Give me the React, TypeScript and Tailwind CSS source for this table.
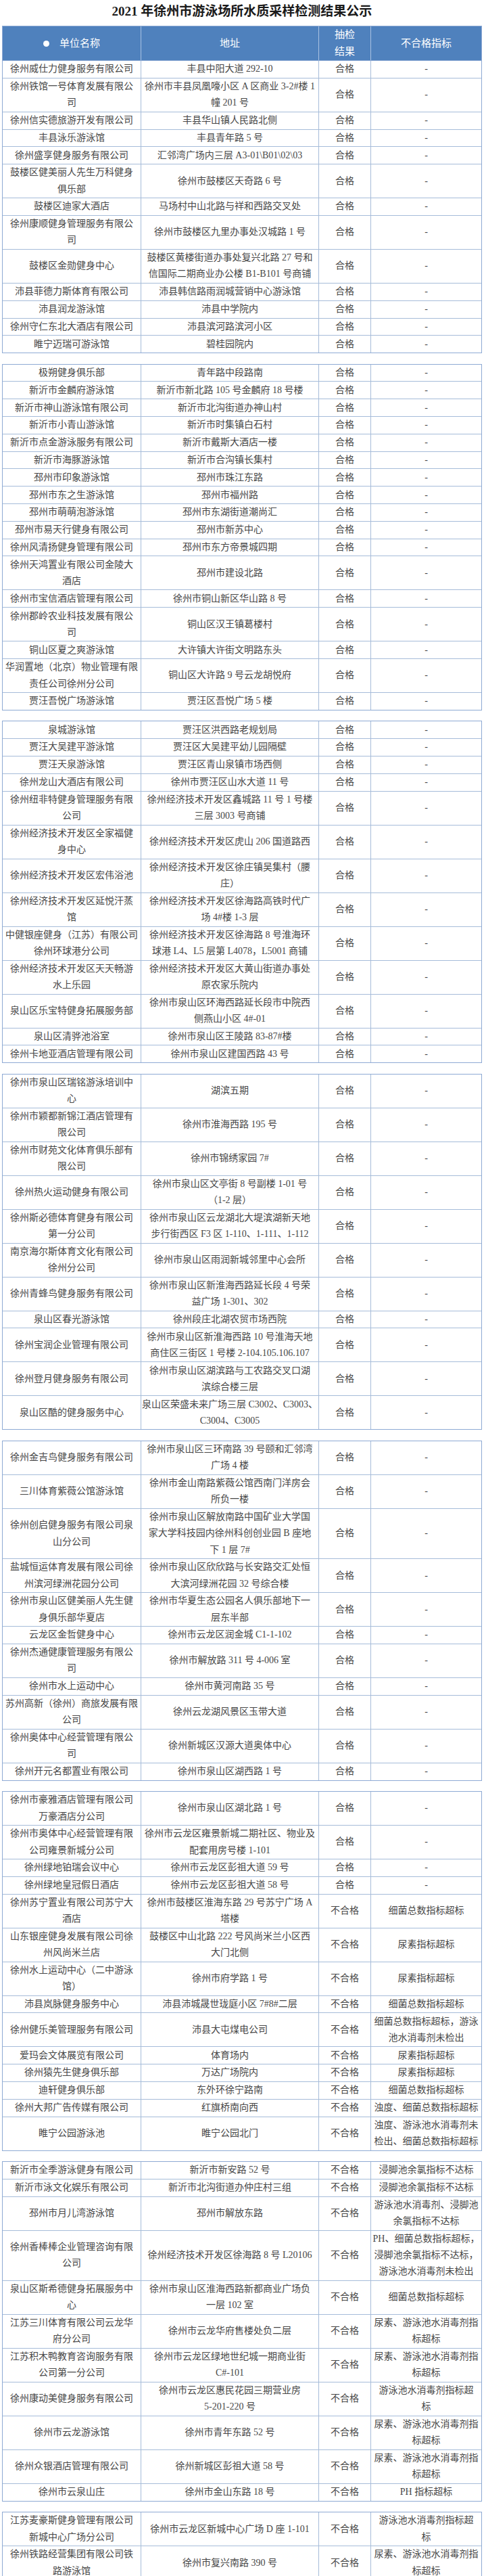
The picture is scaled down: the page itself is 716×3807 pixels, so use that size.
type Row = [string, string, string?, string?]

// "|" marks the line breaks seen in the reference
const SECTIONS: Row[][] = [
  [
    ['徐州威仕力健身服务有限公司', '丰县中阳大道 292-10'],
    ['徐州铁馆一号体育发展有限公|司', '徐州市丰县凤凰嚎小区 A 区商业 3-2#楼 1|幢 201 号'],
    ['徐州信实德旅游开发有限公司', '丰县华山镇人民路北侧'],
    ['丰县泳乐游泳馆', '丰县青年路 5 号'],
    ['徐州盛享健身服务有限公司', '汇邻湾广场内三层 A3-01\\B01\\02\\03'],
    ['鼓楼区健美丽人先生万科健身|俱乐部', '徐州市鼓楼区天奇路 6 号'],
    ['鼓楼区迪家大酒店', '马场村中山北路与祥和西路交叉处'],
    ['徐州康顺健身管理服务有限公|司', '徐州市鼓楼区九里办事处汉城路 1 号'],
    ['鼓楼区金勋健身中心', '鼓楼区黄楼街道办事处复兴北路 27 号和|信国际二期商业办公楼 B1-B101 号商铺'],
    ['沛县菲德力斯体育有限公司', '沛县韩信路雨润城营销中心游泳馆'],
    ['沛县润龙游泳馆', '沛县中学院内'],
    ['徐州守仁东北大酒店有限公司', '沛县滨河路滨河小区'],
    ['睢宁迈瑞可游泳馆', '碧桂园院内'],
  ],
  [
    ['极朔健身俱乐部', '青年路中段路南'],
    ['新沂市金麟府游泳馆', '新沂市新北路 105 号金麟府 18 号楼'],
    ['新沂市神山游泳馆有限公司', '新沂市北沟街道办神山村'],
    ['新沂市小青山游泳馆', '新沂市时集镇白石村'],
    ['新沂市点金游泳服务有限公司', '新沂市戴斯大酒店一楼'],
    ['新沂市海豚游泳馆', '新沂市合沟镇长集村'],
    ['邳州市印象游泳馆', '邳州市珠江东路'],
    ['邳州市东之生游泳馆', '邳州市福州路'],
    ['邳州市萌萌泡游泳馆', '邳州市东湖街道潮尚汇'],
    ['邳州市易天行健身有限公司', '邳州市新苏中心'],
    ['徐州风清扬健身管理有限公司', '邳州市东方帝景城四期'],
    ['徐州天鸿置业有限公司金陵大|酒店', '邳州市建设北路'],
    ['徐州市宝信酒店管理有限公司', '徐州市铜山新区华山路 8 号'],
    ['徐州郡岭农业科技发展有限公|司', '铜山区汉王镇葛楼村'],
    ['铜山区夏之爽游泳馆', '大许镇大许街文明路东头'],
    ['华润置地（北京）物业管理有限|责任公司徐州分公司', '铜山区大许路 9 号云龙胡悦府'],
    ['贾汪吾悦广场游泳馆', '贾汪区吾悦广场 5 楼'],
  ],
  [
    ['泉城游泳馆', '贾汪区洪西路老规划局'],
    ['贾汪大吴建平游泳馆', '贾汪区大吴建平幼儿园隔壁'],
    ['贾汪天泉游泳馆', '贾汪区青山泉镇市场西侧'],
    ['徐州龙山大酒店有限公司', '徐州市贾汪区山水大道 11 号'],
    ['徐州纽非特健身管理服务有限|公司', '徐州经济技术开发区鑫城路 11 号 1 号楼|三层 3003 号商铺'],
    ['徐州经济技术开发区全家福健|身中心', '徐州经济技术开发区虎山 206 国道路西'],
    ['徐州经济技术开发区宏伟浴池', '徐州经济技术开发区徐庄镇吴集村（腰|庄）'],
    ['徐州经济技术开发区延悦汗蒸|馆', '徐州经济技术开发区徐海路高铁时代广|场 4#楼 1-3 层'],
    ['中健银座健身（江苏）有限公司|徐州环球港分公司', '徐州经济技术开发区徐海路 8 号淮海环|球港 L4、L5 层第 L4078，L5001 商铺'],
    ['徐州经济技术开发区天天畅游|水上乐园', '徐州经济技术开发区大黄山街道办事处|原农家乐院内'],
    ['泉山区乐宝特健身拓展服务部', '徐州市泉山区环海西路延长段市中院西|侧燕山小区 4#-01'],
    ['泉山区清骅池浴室', '徐州市泉山区王陵路 83-87#楼'],
    ['徐州卡地亚酒店管理有限公司', '徐州市泉山区建国西路 43 号'],
  ],
  [
    ['徐州市泉山区瑞铭游泳培训中|心', '湖滨五期'],
    ['徐州市颖都新锦江酒店管理有|限公司', '徐州市淮海西路 195 号'],
    ['徐州市财苑文化体育俱乐部有|限公司', '徐州市锦绣家园 7#'],
    ['徐州热火运动健身有限公司', '徐州市泉山区文亭街 8 号副楼 1-01 号|（1-2 层）'],
    ['徐州斯必德体育健身有限公司|第一分公司', '徐州市泉山区云龙湖北大堤滨湖新天地|步行街西区 F3 区 1-110、1-111、1-112'],
    ['南京海尔斯体育文化有限公司|徐州分公司', '徐州市泉山区雨润新城邻里中心会所'],
    ['徐州青蜂鸟健身服务有限公司', '徐州市泉山区新淮海西路延长段 4 号荣|益广场 1-301、302'],
    ['泉山区春光游泳馆', '徐州段庄北湖农贸市场西院'],
    ['徐州宝润企业管理有限公司', '徐州市泉山区新淮海西路 10 号淮海天地|商住区三街区 1 号楼 2-104.105.106.107'],
    ['徐州登月健身服务有限公司', '徐州市泉山区湖滨路与工农路交叉口湖|滨综合楼三层'],
    ['泉山区酷的健身服务中心', '泉山区荣盛未来广场三层 C3002、C3003、|C3004、C3005'],
  ],
  [
    ['徐州金吉鸟健身服务有限公司', '徐州市泉山区三环南路 39 号颐和汇邻湾|广场 4 楼'],
    ['三川体育紫薇公馆游泳馆', '徐州市金山南路紫薇公馆西南门洋房会|所负一楼'],
    ['徐州创启健身服务有限公司泉|山分公司', '徐州市泉山区解放南路中国矿业大学国|家大学科技园内徐州科创创业园 B 座地|下 1 层 7#'],
    ['盐城恒运体育发展有限公司徐|州滨河绿洲花园分公司', '徐州市泉山区欣欣路与长安路交汇处恒|大滨河绿洲花园 32 号综合楼'],
    ['徐州市泉山区健美丽人先生健|身俱乐部华夏店', '徐州市华夏生态公园名人俱乐部地下一|层东半部'],
    ['云龙区金哲健身中心', '徐州市云龙区润金城 C1-1-102'],
    ['徐州杰通健康管理服务有限公|司', '徐州市解放路 311 号 4-006 室'],
    ['徐州市水上运动中心', '徐州市黄河南路 35 号'],
    ['苏州高新（徐州）商旅发展有限|公司', '徐州云龙湖风景区玉带大道'],
    ['徐州奥体中心经营管理有限公|司', '徐州新城区汉源大道奥体中心'],
    ['徐州开元名都置业有限公司', '徐州市泉山区湖西路 1 号'],
  ],
  [
    ['徐州市豪雅酒店管理有限公司|万豪酒店分公司', '徐州市泉山区湖北路 1 号'],
    ['徐州市奥体中心经营管理有限|公司雍景新城分公司', '徐州市云龙区雍景新城二期社区、物业及|配套用房号楼 1-101'],
    ['徐州绿地铂瑞会议中心', '徐州市云龙区彭祖大道 59 号'],
    ['徐州绿地皇冠假日酒店', '徐州市云龙区彭祖大道 58 号'],
    ['徐州苏宁置业有限公司苏宁大|酒店', '徐州市鼓楼区淮海东路 29 号苏宁广场 A|塔楼', '不合格', '细菌总数指标超标'],
    ['山东银座健身发展有限公司徐|州风尚米兰店', '鼓楼区中山北路 222 号风尚米兰小区西|大门北侧', '不合格', '尿素指标超标'],
    ['徐州水上运动中心（二中游泳|馆）', '徐州市府学路 1 号', '不合格', '尿素指标超标'],
    ['沛县岚脉健身服务中心', '沛县沛城晟世珑庭小区 7#8#二层', '不合格', '细菌总数指标超标'],
    ['徐州健乐美管理服务有限公司', '沛县大屯煤电公司', '不合格', '细菌总数指标超标，游泳|池水消毒剂未检出'],
    ['爱玛会文体展览有限公司', '体育场内', '不合格', '尿素指标超标'],
    ['徐州猿先生健身俱乐部', '万达广场院内', '不合格', '尿素指标超标'],
    ['迪轩健身俱乐部', '东外环徐宁路南', '不合格', '细菌总数指标超标'],
    ['徐州大邦广告传媒有限公司', '红旗桥南向西', '不合格', '浊度、细菌总数指标超标'],
    ['睢宁公园游泳池', '睢宁公园北门', '不合格', '浊度、游泳池水消毒剂未|检出、细菌总数指标超标'],
  ],
  [
    ['新沂市全季游泳健身有限公司', '新沂市新安路 52 号', '不合格', '浸脚池余氯指标不达标'],
    ['新沂市泳文化娱乐有限公司', '新沂市北沟街道办仲庄村三组', '不合格', '浸脚池余氯指标不达标'],
    ['邳州市月儿湾游泳馆', '邳州市解放东路', '不合格', '游泳池水消毒剂、浸脚池|余氯指标不达标'],
    ['徐州香棒棒企业管理咨询有限|公司', '徐州经济技术开发区徐海路 8 号 L20106', '不合格', 'PH、细菌总数指标超标，|浸脚池余氯指标不达标，|游泳池水消毒剂未检出'],
    ['泉山区斯希德健身拓展服务中|心', '徐州市泉山区淮海西路新都商业广场负|一层 102 室', '不合格', '细菌总数指标超标'],
    ['江苏三川体育有限公司云龙华|府分公司', '徐州市云龙华府售楼处负二层', '不合格', '尿素、游泳池水消毒剂指|标超标'],
    ['江苏积木鸭教育咨询服务有限|公司第一分公司', '徐州市云龙区绿地世纪城一期商业街|C#-101', '不合格', '尿素、游泳池水消毒剂指|标超标'],
    ['徐州康动美健身服务有限公司', '徐州市云龙区惠民花园三期营业房|5-201-220 号', '不合格', '游泳池水消毒剂指标超|标'],
    ['徐州市云龙游泳馆', '徐州市青年东路 52 号', '不合格', '尿素、游泳池水消毒剂指|标超标'],
    ['徐州众银酒店管理有限公司', '徐州新城区彭祖大道 58 号', '不合格', '尿素、游泳池水消毒剂指|标超标'],
    ['徐州市云泉山庄', '徐州市金山东路 18 号', '不合格', 'PH 指标超标'],
  ],
  [
    ['江苏麦豪斯健身管理有限公司|新城中心广场分公司', '徐州市云龙区新城中心广场 D 座 1-101', '不合格', '游泳池水消毒剂指标超|标'],
    ['徐州铁路经营集团有限公司铁|路游泳馆', '徐州市复兴南路 390 号', '不合格', '尿素、游泳池水消毒剂指|标超标'],
  ],
]

const GRID = 'grid grid-cols-[205px_263px_77px_1fr]'
const CELL =
  'flex items-center justify-center text-center py-[0.3px] leading-[24.2px] whitespace-nowrap'

function Lines({ text }: { text: string }) {
  const parts = text.split('|')
  return (
    <div>
      {parts.map((p, i) => (
        <div key={i}>{p}</div>
      ))}
    </div>
  )
}

function HeaderRow() {
  return (
    <div className={`${GRID} h-[51px] bg-[#4f81bd] text-white text-[15px] border-b border-[#8eaad4]`}>
      <div className="flex items-center justify-center border-r border-[#a9c1e2]">
        <span className="w-[9px] h-[9px] rounded-full bg-white" />
        <span className="ml-[15px]">单位名称</span>
      </div>
      <div className="flex items-center justify-center border-r border-[#a9c1e2]">地址</div>
      <div className="flex flex-col items-center justify-center leading-[25px] border-r border-[#a9c1e2]">
        <span>抽检</span>
        <span>结果</span>
      </div>
      <div className="flex items-center justify-center">不合格指标</div>
    </div>
  )
}

function DataRow({ row }: { row: Row }) {
  const [name, addr, result = '合格', issue = '-'] = row
  return (
    <div className={`${GRID} border-b border-[#a6bcd9] last:border-b-0`}>
      <div className={`${CELL} border-r border-[#a6bcd9]`}>
        <Lines text={name} />
      </div>
      <div className={`${CELL} border-r border-[#a6bcd9]`}>
        <Lines text={addr} />
      </div>
      <div className={`${CELL} border-r border-[#a6bcd9]`}>{result}</div>
      <div className={CELL}>
        <Lines text={issue} />
      </div>
    </div>
  )
}

export default function App() {
  return (
    <div
      className="w-[716px] min-h-[3807px] bg-white text-[#474747] text-[14px]"
      style={{ fontFamily: '"Liberation Serif", "Noto Sans CJK SC", serif' }}
    >
      <div className="h-[38px] pt-[5px] text-center">
        <h1
          className="text-[19px] leading-[23px] font-bold text-[#1a1a1a]"
          style={{ fontFamily: '"Liberation Serif", "Noto Sans CJK SC", serif' }}
        >
          2021 年徐州市游泳场所水质采样检测结果公示
        </h1>
      </div>
      <div className="flex flex-col gap-[15.5px]">
        {SECTIONS.map((rows, i) => (
          <div key={i} className="mx-[3px] w-[710px] border border-[#8eaad4]">
            {i === 0 && <HeaderRow />}
            {rows.map((r, j) => (
              <DataRow key={j} row={r} />
            ))}
          </div>
        ))}
      </div>
    </div>
  )
}
